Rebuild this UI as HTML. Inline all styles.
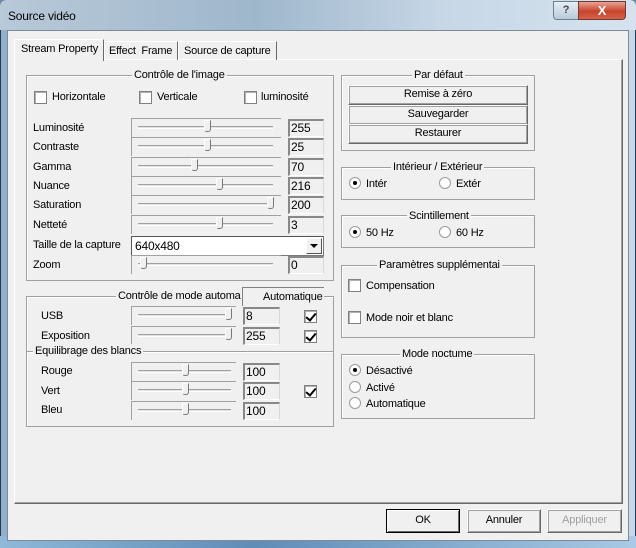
<!DOCTYPE html>
<html><head><meta charset="utf-8"><style>
*{margin:0;padding:0;box-sizing:border-box}
body{width:636px;height:548px;overflow:hidden;background:#6a8aa8;font-family:"Liberation Sans",Arial,sans-serif;font-size:11px;letter-spacing:-0.2px;color:#000;position:relative}
.a{position:absolute}
.t{position:absolute;white-space:nowrap;line-height:14px}
.frame{left:0;top:0;width:636px;height:548px;background:linear-gradient(90deg,#8fb0cc 0%,#a9c3da 30%,#b9cfe3 60%,#c6d9ea 100%);border:1px solid #2a3a4a;border-radius:6px 6px 0 0}
.gb{position:absolute;border:1px solid #a0a0a0;box-shadow:inset 1px 1px 0 #fff}
.gt{position:absolute;background:#f0f0f0;padding:0 2px;line-height:14px;white-space:nowrap}
.cb{position:absolute;width:13px;height:13px;background:#fff;border:1px solid #808080;box-shadow:inset 1px 1px 0 #b0b0b0}
.cb.k::after{content:"";position:absolute;left:3px;top:0px;width:4px;height:8px;border-right:2px solid #000;border-bottom:2px solid #000;transform:rotate(40deg)}
.rb{position:absolute;width:12px;height:12px;border-radius:50%;background:#fff;border:1px solid #9a9a9a}
.rb.k::after{content:"";position:absolute;left:3px;top:3px;width:4px;height:4px;border-radius:50%;background:#000}
.sl{position:absolute;height:19px;border-top:1px solid #a0a0a0;border-left:1px solid #a0a0a0}
.tr{position:absolute;top:7px;height:3px;border-top:1px solid #a0a0a0;border-bottom:1px solid #fff;background:#e3e3e3}
.th{position:absolute;top:2px;width:7px;height:12px;background:#f0f0f0;border:1px solid #777;border-top-color:#fff;border-left-color:#fff;border-radius:0 0 3px 3px}
.ed{position:absolute;height:18px;background:#f0f0f0;border-top:2px solid #888;border-left:2px solid #888;border-right:1px solid #d8d8d8;border-bottom:1px solid #fff;padding-left:1px;line-height:14px;font-size:12px}
.bt{position:absolute;background:#f0f0f0;border:1px solid #fff;border-right-color:#696969;border-bottom-color:#696969;box-shadow:1px 1px 0 #a0a0a0 inset,-1px -1px 0 #a0a0a0 inset;text-align:center;line-height:17px}
</style></head><body>
<div class="a frame"></div>
<div class="a" style="left:0;top:0;width:636px;height:30px;background:linear-gradient(90deg,#b8c9d8,#9fb7cc 40%,#c7d7e6 70%,#d6e3ef);border-radius:6px 6px 0 0"></div>
<div class="t" style="left:8px;top:9px;font-size:12px">Source vidéo</div>
<div class="a" style="left:553px;top:1px;width:26px;height:19px;background:linear-gradient(#e6eef5,#b9cada);border:1px solid #6f7f90;border-radius:0 0 0 4px;text-align:center;font-weight:bold;color:#444;line-height:17px">?</div>
<div class="a" style="left:578px;top:1px;width:48px;height:19px;background:linear-gradient(#e8a393,#c8442c 55%,#d4624a);border:1px solid #6f3a30;border-radius:0 0 4px 0;text-align:center;font-weight:bold;color:#fff;line-height:17px;font-size:13px">X</div>
<div class="a" style="left:0;top:536px;width:636px;height:12px;background:linear-gradient(90deg,#8fb8d8,#5f8cb8 40%,#a9c9e4)"></div>
<div class="a" style="left:7px;top:30px;width:622px;height:511px;background:#f0f0f0;border:1px solid #7d8b99"></div>

<!-- tab panel -->
<div class="a" style="left:14px;top:59px;width:609px;height:445px;border:1px solid #fff;border-right-color:#696969;border-bottom-color:#696969;box-shadow:inset -1px -1px 0 #a0a0a0"></div>
<div class="a" style="left:104px;top:41px;width:74px;height:19px;border:1px solid #fff;border-right:1px solid #696969;border-bottom:none"></div>
<div class="t" style="left:109px;top:44px">Effect &nbsp;Frame</div>
<div class="a" style="left:178px;top:41px;width:99px;height:19px;border:1px solid #fff;border-right:1px solid #696969;border-bottom:none"></div>
<div class="t" style="left:184px;top:44px">Source de capture</div>
<div class="a" style="left:14px;top:39px;width:90px;height:22px;background:#f0f0f0;border:1px solid #fff;border-right:1px solid #696969;border-bottom:none"></div>
<div class="t" style="left:21px;top:42px">Stream Property</div>

<!-- group 1 -->
<div class="gb" style="left:26px;top:75px;width:308px;height:206px"></div>
<div class="gt" style="left:132px;top:68px">Contrôle de l'image</div>
<div class="cb" style="left:34px;top:91px"></div><div class="t" style="left:52px;top:90px">Horizontale</div>
<div class="cb" style="left:139px;top:91px"></div><div class="t" style="left:157px;top:90px">Verticale</div>
<div class="cb" style="left:244px;top:91px"></div><div class="t" style="left:261px;top:90px">luminosité</div>

<div class="t" style="left:33px;top:121px">Luminosité</div>
<div class="sl" style="left:131px;top:118px;width:150px"><div class="tr" style="left:6px;width:135px"></div></div><div class="th" style="left:204px;top:120px"></div>
<div class="ed" style="left:288px;top:119px;width:36px">255</div>
<div class="t" style="left:33px;top:140px">Contraste</div>
<div class="sl" style="left:131px;top:137px;width:150px"><div class="tr" style="left:6px;width:135px"></div></div><div class="th" style="left:204px;top:139px"></div>
<div class="ed" style="left:288px;top:138px;width:36px">25</div>
<div class="t" style="left:33px;top:160px">Gamma</div>
<div class="sl" style="left:131px;top:157px;width:150px"><div class="tr" style="left:6px;width:135px"></div></div><div class="th" style="left:191px;top:159px"></div>
<div class="ed" style="left:288px;top:158px;width:36px">70</div>
<div class="t" style="left:33px;top:179px">Nuance</div>
<div class="sl" style="left:131px;top:176px;width:150px"><div class="tr" style="left:6px;width:135px"></div></div><div class="th" style="left:216px;top:178px"></div>
<div class="ed" style="left:288px;top:177px;width:36px">216</div>
<div class="t" style="left:33px;top:198px">Saturation</div>
<div class="sl" style="left:131px;top:195px;width:150px"><div class="tr" style="left:6px;width:135px"></div></div><div class="th" style="left:267px;top:197px"></div>
<div class="ed" style="left:288px;top:196px;width:36px">200</div>
<div class="t" style="left:33px;top:218px">Netteté</div>
<div class="sl" style="left:131px;top:215px;width:150px"><div class="tr" style="left:6px;width:135px"></div></div><div class="th" style="left:216px;top:217px"></div>
<div class="ed" style="left:288px;top:216px;width:36px">3</div>
<div class="t" style="left:33px;top:238px">Taille de la capture</div>
<div class="a" style="left:131px;top:236px;width:193px;height:20px;background:#fff;border:1px solid #7a7a7a;border-top-color:#555;border-left-color:#555"></div>
<div class="t" style="left:135px;top:239px;font-size:12px">640x480</div>
<div class="a" style="left:306px;top:238px;width:16px;height:16px;background:#f0f0f0;border:1px solid #fff;border-right-color:#555;border-bottom-color:#555"></div>
<div class="a" style="left:310px;top:244px;width:0;height:0;border-left:4px solid transparent;border-right:4px solid transparent;border-top:4px solid #000"></div>
<div class="t" style="left:33px;top:258px">Zoom</div>
<div class="sl" style="left:131px;top:255px;width:150px"><div class="tr" style="left:6px;width:135px"></div></div><div class="th" style="left:140px;top:257px"></div>
<div class="ed" style="left:288px;top:256px;width:36px">0</div>

<!-- group 2 -->
<div class="gb" style="left:26px;top:296px;width:308px;height:131px"></div>
<div class="gt" style="left:116px;top:289px">Contrôle de mode automa</div>
<div class="a" style="left:242px;top:287px;width:82px;height:19px;background:#f0f0f0;border-top:1px solid #808080;border-left:1px solid #808080"></div>
<div class="t" style="left:263px;top:290px">Automatique</div>
<div class="t" style="left:41px;top:309px">USB</div>
<div class="sl" style="left:131px;top:306px;width:105px"><div class="tr" style="left:6px;width:93px"></div></div><div class="th" style="left:225px;top:308px"></div>
<div class="ed" style="left:243px;top:307px;width:37px">8</div>
<div class="cb k" style="left:304px;top:310px"></div>
<div class="t" style="left:41px;top:329px">Exposition</div>
<div class="sl" style="left:131px;top:326px;width:105px"><div class="tr" style="left:6px;width:93px"></div></div><div class="th" style="left:225px;top:328px"></div>
<div class="ed" style="left:243px;top:327px;width:37px">255</div>
<div class="cb k" style="left:304px;top:330px"></div>
<div class="a" style="left:27px;top:351px;width:306px;height:1px;background:#a0a0a0;box-shadow:0 1px 0 #fff"></div>
<div class="gt" style="left:33px;top:344px">Equilibrage des blancs</div>
<div class="t" style="left:41px;top:364px">Rouge</div>
<div class="sl" style="left:131px;top:362px;width:105px"><div class="tr" style="left:6px;width:93px"></div></div><div class="th" style="left:182px;top:364px"></div>
<div class="ed" style="left:243px;top:363px;width:37px">100</div>
<div class="t" style="left:41px;top:384px">Vert</div>
<div class="sl" style="left:131px;top:381px;width:105px"><div class="tr" style="left:6px;width:93px"></div></div><div class="th" style="left:182px;top:383px"></div>
<div class="ed" style="left:243px;top:382px;width:37px">100</div>
<div class="cb k" style="left:304px;top:385px"></div>
<div class="t" style="left:41px;top:403px">Bleu</div>
<div class="sl" style="left:131px;top:401px;width:105px"><div class="tr" style="left:6px;width:93px"></div></div><div class="th" style="left:182px;top:403px"></div>
<div class="ed" style="left:243px;top:402px;width:37px">100</div>

<!-- right groups -->
<div class="gb" style="left:341px;top:75px;width:194px;height:76px"></div>
<div class="gt" style="left:412px;top:68px">Par défaut</div>
<div class="bt" style="left:348px;top:85px;width:180px;height:20px">Remise à zéro</div>
<div class="bt" style="left:348px;top:105px;width:180px;height:20px">Sauvegarder</div>
<div class="bt" style="left:348px;top:124px;width:180px;height:20px">Restaurer</div>

<div class="gb" style="left:341px;top:167px;width:194px;height:33px"></div>
<div class="gt" style="left:391px;top:160px">Intérieur / Extérieur</div>
<div class="rb k" style="left:349px;top:177px"></div><div class="t" style="left:366px;top:177px">Intér</div>
<div class="rb" style="left:439px;top:177px"></div><div class="t" style="left:456px;top:177px">Extér</div>

<div class="gb" style="left:341px;top:215px;width:194px;height:33px"></div>
<div class="gt" style="left:407px;top:209px">Scintillement</div>
<div class="rb k" style="left:349px;top:226px"></div><div class="t" style="left:366px;top:226px">50 Hz</div>
<div class="rb" style="left:439px;top:226px"></div><div class="t" style="left:456px;top:226px">60 Hz</div>

<div class="gb" style="left:341px;top:265px;width:194px;height:73px"></div>
<div class="gt" style="left:377px;top:258px">Paramètres supplémentai</div>
<div class="cb" style="left:348px;top:279px"></div><div class="t" style="left:366px;top:279px">Compensation</div>
<div class="cb" style="left:348px;top:311px"></div><div class="t" style="left:366px;top:311px">Mode noir et blanc</div>

<div class="gb" style="left:341px;top:354px;width:194px;height:65px"></div>
<div class="gt" style="left:400px;top:347px">Mode noctume</div>
<div class="rb k" style="left:349px;top:364px"></div><div class="t" style="left:366px;top:364px">Désactivé</div>
<div class="rb" style="left:349px;top:381px"></div><div class="t" style="left:366px;top:381px">Activé</div>
<div class="rb" style="left:349px;top:397px"></div><div class="t" style="left:366px;top:397px">Automatique</div>

<!-- bottom buttons -->
<div class="bt" style="left:386px;top:509px;width:74px;height:24px;line-height:21px;border:1px solid #000;box-shadow:inset 1px 1px 0 #fff,inset -1px -1px 0 #696969">OK</div>
<div class="bt" style="left:467px;top:509px;width:74px;height:24px;line-height:21px">Annuler</div>
<div class="bt" style="left:547px;top:509px;width:75px;height:24px;line-height:21px;color:#a0a0a0">Appliquer</div>
</body></html>
